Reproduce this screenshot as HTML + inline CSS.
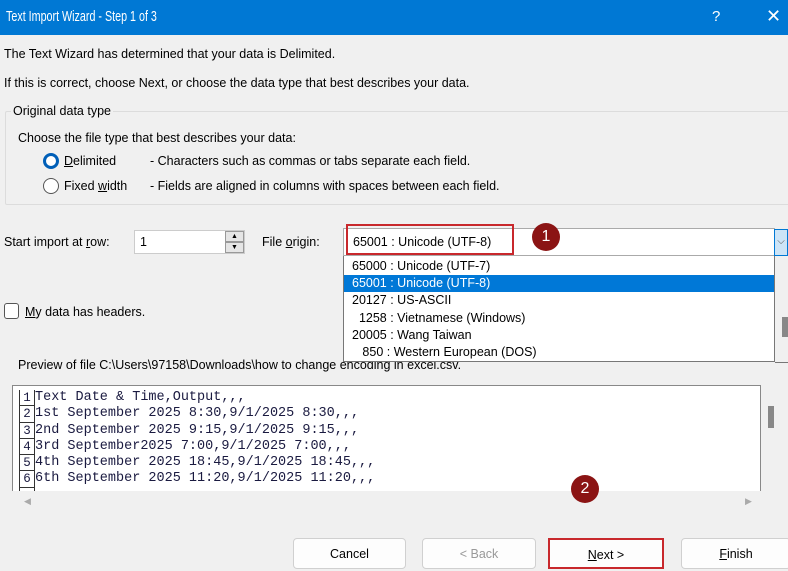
<!DOCTYPE html>
<html><head><style>
body{margin:0;width:788px;height:569px;overflow:hidden;background:#f0f0f0;font-family:"Liberation Sans",sans-serif;font-size:12.5px;color:#000;position:relative}
.a{position:absolute;white-space:nowrap}
.title{left:0;top:0;width:788px;height:35px;background:#0078d4;color:#fff}
.mono{font-family:"Liberation Mono",monospace;font-size:13.5px;color:#1a1a40}
.btn{position:absolute;top:538px;height:31px;background:#fdfdfd;border:1px solid #d0d0d0;border-radius:4px;text-align:center;line-height:31px;box-sizing:border-box}
.circ{position:absolute;width:28px;height:28px;border-radius:50%;background:#8b1414;color:#fff;text-align:center;line-height:28px;font-size:16px}
.li{position:absolute;left:344px;width:430px;height:17px;line-height:17px;padding-left:8px;box-sizing:border-box}
.g{height:16.3px;border-bottom:1px solid #333;box-sizing:border-box;text-align:center;line-height:16px}
</style></head><body>
<div class="a title"><span class="a" style="left:6px;top:9px;font-size:14.5px;transform:scaleX(0.74);transform-origin:0 0">Text Import Wizard - Step 1 of 3</span><span class="a" style="left:712px;top:8px;font-size:15px;font-weight:300">?</span><span class="a" style="left:766px;top:6px;font-size:18px">✕</span></div>
<div class="a" style="left:4px;top:47px">The Text Wizard has determined that your data is Delimited.</div>
<div class="a" style="left:4px;top:76px">If this is correct, choose Next, or choose the data type that best describes your data.</div>
<div class="a" style="left:5px;top:111px;width:790px;height:92px;border:1px solid #dcdcdc;border-radius:2px"></div>
<div class="a" style="left:11px;top:104px;background:#f0f0f0;padding:0 2px">Original data type</div>
<div class="a" style="left:18px;top:131px">Choose the file type that best describes your data:</div>
<div class="a" style="left:43px;top:153px;width:10px;height:10px;border:3px solid #005fb8;border-radius:50%;background:#fff;box-sizing:content-box"></div>
<div class="a" style="left:64px;top:154px"><u>D</u>elimited</div>
<div class="a" style="left:150px;top:154px">- Characters such as commas or tabs separate each field.</div>
<div class="a" style="left:43px;top:178px;width:14px;height:14px;border:1px solid #555;border-radius:50%;background:#fff"></div>
<div class="a" style="left:64px;top:179px">Fixed <u>w</u>idth</div>
<div class="a" style="left:150px;top:179px">- Fields are aligned in columns with spaces between each field.</div>
<div class="a" style="left:4px;top:235px">Start import at <u>r</u>ow:</div>
<div class="a" style="left:134px;top:230px;width:111px;height:24px;background:#fff;border:1px solid #ccc;box-sizing:border-box"></div>
<div class="a" style="left:140px;top:235px">1</div>
<div class="a" style="left:225px;top:231px;width:19px;height:11px;background:#e5e5e5;border:1px solid #999;box-sizing:border-box;font-size:7px;text-align:center;line-height:10px">▲</div>
<div class="a" style="left:225px;top:242px;width:19px;height:11px;background:#e5e5e5;border:1px solid #999;box-sizing:border-box;font-size:7px;text-align:center;line-height:10px">▼</div>
<div class="a" style="left:262px;top:235px">File <u>o</u>rigin:</div>
<div class="a" style="left:18px;top:358px">Preview of file C:\Users\97158\Downloads\how to change encoding in excel.csv.</div>
<div class="a" style="left:343px;top:228px;width:432px;height:28px;background:#fff;border:1px solid #aaa;box-sizing:border-box"></div>
<div class="a" style="left:774px;top:229px;width:14px;height:27px;background:#cce4f7;border:1px solid #0078d4;box-sizing:border-box;color:#555;font-size:10px;line-height:24px;text-align:center">⌵</div>
<div class="a" style="left:353px;top:235px">65001 : Unicode (UTF-8)</div>
<div class="a" style="left:346px;top:224px;width:168px;height:31px;border:2px solid #c8282c;box-sizing:border-box"></div>
<div class="circ" style="left:532px;top:223px">1</div>
<div class="a" style="left:343px;top:256px;width:432px;height:106px;background:#fff;border:1px solid #777;border-top:none;box-sizing:border-box"></div>
<div class="a" style="left:775px;top:256px;width:13px;height:106px;background:#f0f0f0;border-bottom:1px solid #777"></div>
<div class="a" style="left:782px;top:317px;width:6px;height:20px;background:#888"></div>
<div class="li" style="top:258px">65000 : Unicode (UTF-7)</div>
<div class="li" style="top:275px;background:#0078d7;color:#fff">65001 : Unicode (UTF-8)</div>
<div class="li" style="top:292px">20127 : US-ASCII</div>
<div class="li" style="top:310px">&nbsp; 1258 : Vietnamese (Windows)</div>
<div class="li" style="top:327px">20005 : Wang Taiwan</div>
<div class="li" style="top:344px">&nbsp;&nbsp; 850 : Western European (DOS)</div>
<div class="a" style="left:4px;top:303px;width:15px;height:16px;border:1px solid #555;border-radius:3px;background:#fff;box-sizing:border-box"></div>
<div class="a" style="left:25px;top:305px"><u>M</u>y data has headers.</div>
<div class="a" style="left:12px;top:385px;width:749px;height:106px;background:#fff;border:1px solid #888;border-bottom:none;box-sizing:border-box"></div>
<div class="a" style="left:12px;top:491px;width:749px;height:20px;background:#f0f0f0"></div>
<div class="a" style="left:24px;top:496px;font-size:9px;color:#aaa">◀</div>
<div class="a" style="left:745px;top:496px;font-size:9px;color:#aaa">▶</div>
<div class="a" style="left:768px;top:406px;width:6px;height:22px;background:#888"></div>
<div class="a mono" style="left:19px;top:390px;width:16px;height:101px;border-left:1px solid #333;border-right:1px solid #333;box-sizing:border-box;font-size:12.5px">
<div class="g">1</div><div class="g">2</div><div class="g">3</div><div class="g">4</div><div class="g">5</div><div class="g">6</div></div>
<div class="a mono" style="left:35px;top:390px;line-height:16.3px">
<div>Text Date &amp; Time,Output,,,</div>
<div>1st September 2025 8:30,9/1/2025 8:30,,,</div>
<div>2nd September 2025 9:15,9/1/2025 9:15,,,</div>
<div>3rd September2025 7:00,9/1/2025 7:00,,,</div>
<div>4th September 2025 18:45,9/1/2025 18:45,,,</div>
<div>6th September 2025 11:20,9/1/2025 11:20,,,</div>
</div>
<div class="circ" style="left:571px;top:475px">2</div>
<div class="btn" style="left:293px;width:113px">Cancel</div>
<div class="btn" style="left:422px;width:114px;color:#999">&lt; Back</div>
<div class="btn" style="left:548px;width:116px;border:2px solid #c8282c;border-radius:0"><u>N</u>ext &gt;</div>
<div class="btn" style="left:681px;width:110px"><u>F</u>inish</div>
</body></html>
